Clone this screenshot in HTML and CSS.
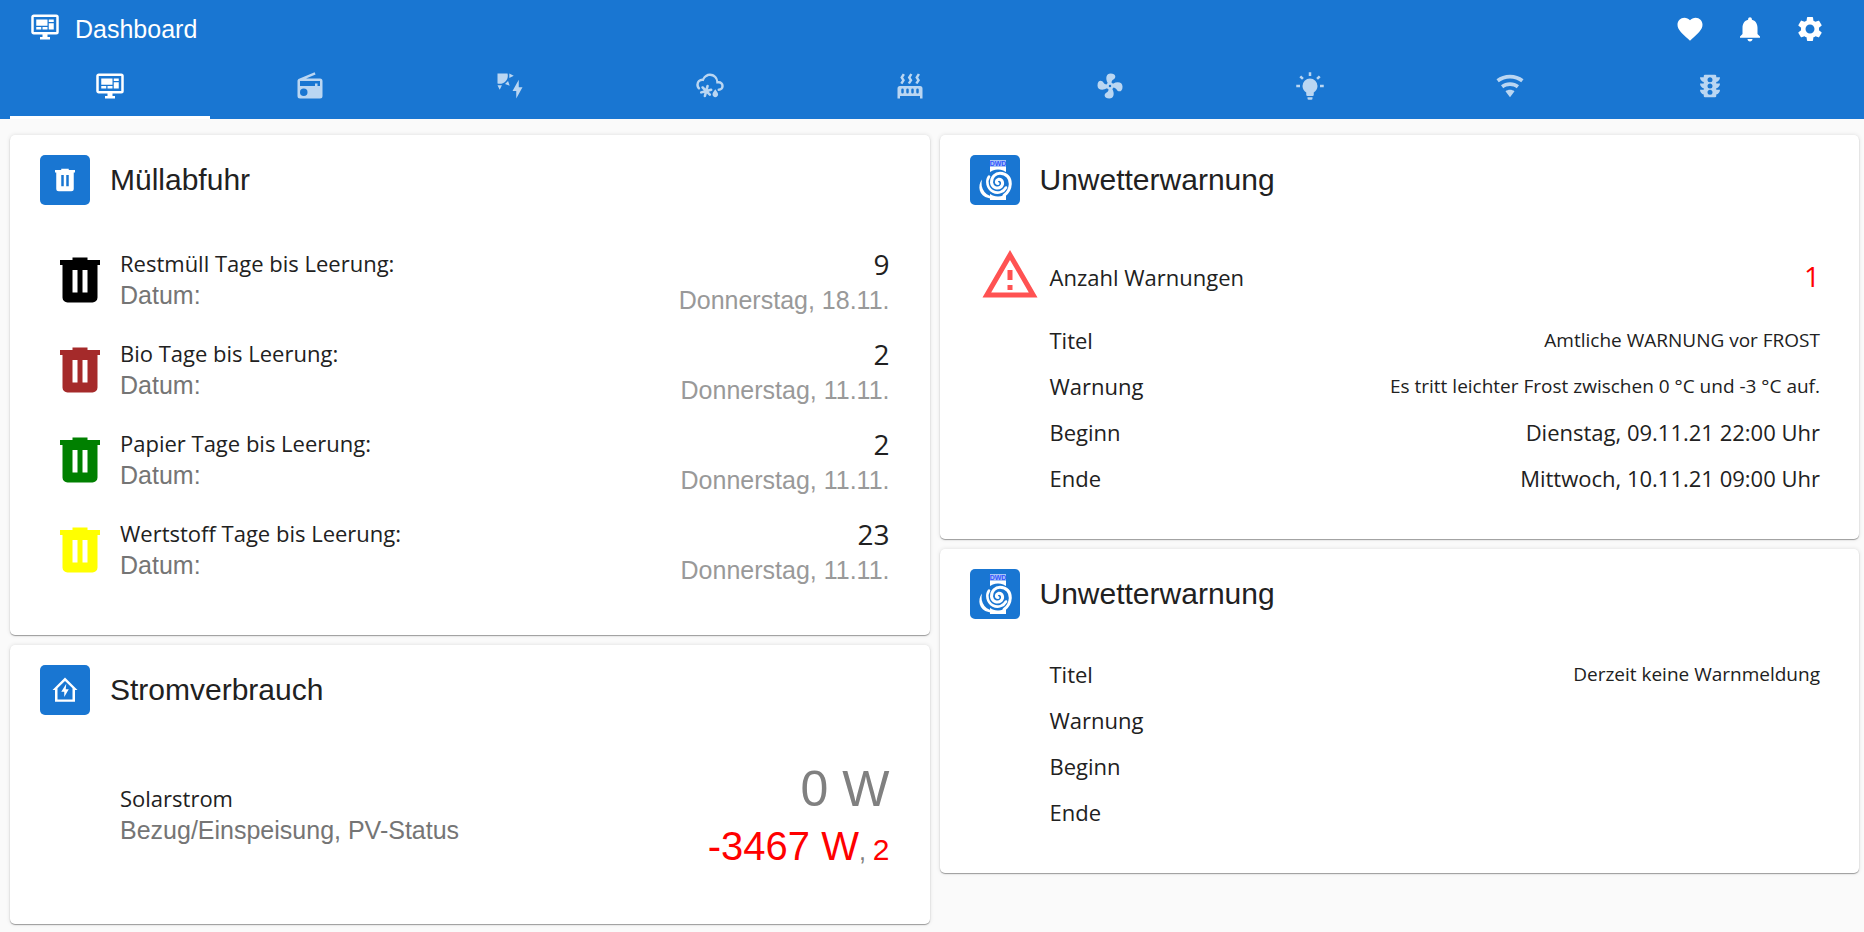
FILE: index.html
```html
<!DOCTYPE html>
<html lang="de">
<head>
<meta charset="utf-8">
<title>Dashboard</title>
<meta name="viewport" content="width=device-width, initial-scale=1">
<link rel="stylesheet" href="styles.css">
</head>
<body>
<svg class="sprite" aria-hidden="true">
  <symbol id="monitor" viewBox="0 0 24 24"><path d="M21,16V4H3V16H21M21,2A2,2 0 0,1 23,4V16A2,2 0 0,1 21,18H14V20H16V22H8V20H10V18H3C1.89,18 1,17.1 1,16V4C1,2.89 1.89,2 3,2H21M5,6H14V11H5V6M15,6H19V8H15V6M19,9V14H15V9H19M5,12H9V14H5V12M10,12H14V14H10V12Z"/></symbol>
  <symbol id="trash" viewBox="0 0 24 24"><path d="M9,3V4H4V6H5V19A2,2 0 0,0 7,21H17A2,2 0 0,0 19,19V6H20V4H15V3H9M9,8H11V17H9V8M13,8H15V17H13V8Z"/></symbol>
  <symbol id="dwd" viewBox="0 0 50 50">
    <path fill="#fff" d="M20 12h16v33H20z"/>
    <path fill="#a9c4f5" d="M20 5h16v7H20z"/>
    <circle cx="28" cy="28" r="13.500" fill="#1976d2"/>
    <path fill="none" stroke="#fff" stroke-width="3" stroke-linecap="round" d="M28 28.500C26 28.500 25.500 25.500 28.500 24.300C32.500 23.800 34 29 31 31.800C27.500 34.500 22 32.500 21.500 27.500C21.300 22 25.500 18.200 30 18.200C36.500 18.300 40.500 23 40.300 29C40 34.500 37.500 38 34 40.500"/>
    <path fill="none" stroke="#fff" stroke-width="2.600" stroke-linecap="round" d="M19 21.500C16 26 17 33.500 23 36.500C28 39 33.500 37 36 32.500"/>
    <path fill="#fff" d="M12 24.500C7 31 9 41 18.500 43C23 44.500 29 44 33 41.500C25 43 18 41.500 14.500 37C11.500 33 11 29 12 24.500z"/>
  </symbol>
</svg>

<header class="header">
  <div class="toolbar">
    <h1 class="brand"><svg class="icon brand-icon" aria-hidden="true"><use href="#monitor"/></svg>Dashboard</h1>
    <div class="actions">
      <button class="action" type="button" aria-label="Favoriten"><svg class="icon" viewBox="0 0 24 24"><path d="M12,21.35L10.55,20.03C5.4,15.36 2,12.27 2,8.5C2,5.41 4.42,3 7.5,3C9.24,3 10.91,3.81 12,5.08C13.09,3.81 14.76,3 16.5,3C19.58,3 22,5.41 22,8.5C22,12.27 18.6,15.36 13.45,20.03L12,21.35Z"/></svg></button>
      <button class="action" type="button" aria-label="Benachrichtigungen"><svg class="icon" viewBox="0 0 24 24"><path d="M12 22c1.1 0 2-.9 2-2h-4c0 1.1.89 2 2 2zm6-6v-5c0-3.07-1.64-5.64-4.5-6.32V4c0-.83-.67-1.5-1.5-1.5s-1.5.67-1.5 1.5v.68C7.63 5.36 6 7.92 6 11v5l-2 2v1h16v-1l-2-2z"/></svg></button>
      <button class="action" type="button" aria-label="Einstellungen"><svg class="icon" viewBox="0 0 24 24"><path d="M19.14,12.94c0.04-0.3,0.06-0.61,0.06-0.94c0-0.32-0.02-0.64-0.07-0.94l2.03-1.58c0.18-0.14,0.23-0.41,0.12-0.61l-1.92-3.32c-0.12-0.22-0.37-0.29-0.59-0.22l-2.39,0.96c-0.5-0.38-1.03-0.7-1.62-0.94L14.4,2.81c-0.04-0.24-0.24-0.41-0.48-0.41h-3.84c-0.24,0-0.43,0.17-0.47,0.41L9.25,5.35C8.66,5.59,8.12,5.92,7.63,6.29L5.24,5.33c-0.22-0.08-0.47,0-0.59,0.22L2.74,8.87C2.62,9.08,2.66,9.34,2.86,9.48l2.03,1.58C4.84,11.36,4.8,11.69,4.8,12s0.02,0.64,0.07,0.94l-2.03,1.58c-0.18,0.14-0.23,0.41-0.12,0.61l1.92,3.32c0.12,0.22,0.37,0.29,0.59,0.22l2.39-0.96c0.5,0.38,1.03,0.7,1.62,0.94l0.36,2.54c0.05,0.24,0.24,0.41,0.48,0.41h3.84c0.24,0,0.44-0.17,0.47-0.41l0.36-2.54c0.59-0.24,1.13-0.56,1.62-0.94l2.39,0.96c0.22,0.08,0.47,0,0.59-0.22l1.92-3.32c0.12-0.22,0.07-0.47-0.12-0.61L19.14,12.94zM12,15.6c-1.98,0-3.6-1.62-3.6-3.6s1.62-3.6,3.6-3.6s3.6,1.62,3.6,3.6S13.98,15.6,12,15.6z"/></svg></button>
    </div>
  </div>
  <nav class="tabs" aria-label="Seiten">
    <button class="tab tab-active" type="button" aria-label="Dashboard" aria-current="page"><svg class="icon"><use href="#monitor"/></svg></button>
    <button class="tab" type="button" aria-label="Radio"><svg class="icon" viewBox="0 0 24 24"><path d="M20,6A2,2 0 0,1 22,8V20A2,2 0 0,1 20,22H4A2,2 0 0,1 2,20V8C2,7.15 2.53,6.42 3.28,6.13L15.71,1L16.47,2.83L8.83,6H20M20,8H4V12H16V10H18V12H20V8M7,14A3,3 0 0,0 4,17A3,3 0 0,0 7,20A3,3 0 0,0 10,17A3,3 0 0,0 7,14Z"/></svg></button>
    <button class="tab" type="button" aria-label="Solarstrom"><svg class="icon" viewBox="0 0 24 24"><path d="M11.45,2V5.55L15,3.77L11.45,2M10.45,8L8,10.46L11.75,11.71L10.45,8M2,11.45L3.77,15L5.55,11.45H2M10,2H2V10C2.57,10.17 3.17,10.25 3.77,10.25C7.35,10.26 10.26,7.35 10.27,3.75C10.26,3.16 10.17,2.57 10,2M17,22V16H14L19,7V13H22L17,22Z"/></svg></button>
    <button class="tab" type="button" aria-label="Wetter"><svg class="icon" viewBox="0 0 24 24"><path d="M18.5,18.67C18.5,19.96 17.5,21 16.25,21C15,21 14,19.96 14,18.67C14,17.12 16.25,14.5 16.25,14.5C16.25,14.5 18.5,17.12 18.5,18.67M4,17.36C3.86,16.82 4.18,16.25 4.73,16.11L7,15.5L5.33,13.86C4.93,13.46 4.93,12.81 5.33,12.4C5.73,12 6.4,12 6.79,12.4L8.45,14.05L9.04,11.8C9.18,11.24 9.75,10.92 10.29,11.07C10.85,11.21 11.17,11.78 11,12.33L10.42,14.58L12.67,14C13.22,13.83 13.79,14.15 13.93,14.71C14.08,15.25 13.76,15.82 13.2,15.96L10.95,16.55L12.6,18.21C13,18.6 13,19.27 12.6,19.67C12.2,20.07 11.54,20.07 11.15,19.67L9.5,18L8.89,20.27C8.75,20.83 8.18,21.14 7.64,21C7.08,20.86 6.77,20.29 6.91,19.74L7.5,17.5L5.26,18.09C4.71,18.23 4.14,17.92 4,17.36M1,11A5,5 0 0,1 6,6C7,3.65 9.3,2 12,2C15.43,2 18.24,4.66 18.5,8.03L19,8A4,4 0 0,1 23,12A4,4 0 0,1 19,16A1,1 0 0,1 18,15A1,1 0 0,1 19,14A2,2 0 0,0 21,12A2,2 0 0,0 19,10H17V9A5,5 0 0,0 12,4C9.5,4 7.45,5.82 7.06,8.19C6.73,8.07 6.37,8 6,8A3,3 0 0,0 3,11C3,11.85 3.35,12.61 3.91,13.16C4.27,13.55 4.26,14.16 3.88,14.54C3.5,14.93 2.85,14.93 2.47,14.54C1.56,13.63 1,12.38 1,11Z"/></svg></button>
    <button class="tab" type="button" aria-label="Heizung"><svg class="icon" viewBox="0 0 24 24"><path d="M7.95,3L6.53,5.19L7.95,7.4H7.94L5.95,10.5L4.22,9.6L5.64,7.39L4.22,5.19L6.22,2.09L7.95,3M13.95,2.89L12.53,5.1L13.95,7.3L13.94,7.31L11.95,10.4L10.22,9.5L11.64,7.3L10.22,5.1L12.22,2L13.95,2.89M20,2.89L18.56,5.1L20,7.3V7.31L18,10.4L16.25,9.5L17.67,7.3L16.25,5.1L18.25,2L20,2.89M2,22V14A2,2 0 0,1 4,12H20A2,2 0 0,1 22,14V22H20V20H4V22H2M6,14A1,1 0 0,0 5,15V17A1,1 0 0,0 6,18A1,1 0 0,0 7,17V15A1,1 0 0,0 6,14M10,14A1,1 0 0,0 9,15V17A1,1 0 0,0 10,18A1,1 0 0,0 11,17V15A1,1 0 0,0 10,14M14,14A1,1 0 0,0 13,15V17A1,1 0 0,0 14,18A1,1 0 0,0 15,17V15A1,1 0 0,0 14,14M18,14A1,1 0 0,0 17,15V17A1,1 0 0,0 18,18A1,1 0 0,0 19,17V15A1,1 0 0,0 18,14Z"/></svg></button>
    <button class="tab" type="button" aria-label="Lüftung"><svg class="icon" viewBox="0 0 24 24"><path d="M12,11A1,1 0 0,0 11,12A1,1 0 0,0 12,13A1,1 0 0,0 13,12A1,1 0 0,0 12,11M12.5,2C17,2 17.11,5.57 14.75,6.75C13.76,7.24 13.32,8.29 13.13,9.22C13.61,9.42 14.03,9.73 14.35,10.13C18.05,8.13 22.03,8.92 22.03,12.5C22.03,17 18.46,17.1 17.28,14.73C16.78,13.74 15.72,13.3 14.79,13.11C14.59,13.59 14.28,14 13.88,14.34C15.87,18.03 15.08,22 11.5,22C7,22 6.91,18.42 9.27,17.24C10.25,16.75 10.69,15.71 10.89,14.79C10.4,14.59 9.97,14.27 9.65,13.87C5.96,15.85 2,15.07 2,11.5C2,7 5.56,6.89 6.74,9.26C7.24,10.25 8.29,10.68 9.22,10.87C9.41,10.39 9.73,9.97 10.14,9.65C8.15,5.96 8.94,2 12.5,2Z"/></svg></button>
    <button class="tab" type="button" aria-label="Licht"><svg class="icon" viewBox="0 0 24 24"><path d="M12,6A6,6 0 0,1 18,12C18,14.22 16.79,16.16 15,17.2V19A1,1 0 0,1 14,20H10A1,1 0 0,1 9,19V17.2C7.21,16.16 6,14.22 6,12A6,6 0 0,1 12,6M14,21V22A1,1 0 0,1 13,23H11A1,1 0 0,1 10,22V21H14M20,11H23V13H20V11M1,11H4V13H1V11M13,1V4H11V1H13M4.92,3.5L7.05,5.64L5.63,7.05L3.5,4.93L4.92,3.5M16.95,5.63L19.07,3.5L20.5,4.93L18.37,7.05L16.95,5.63Z"/></svg></button>
    <button class="tab" type="button" aria-label="WLAN"><svg class="icon" viewBox="0 0 24 24"><path d="M12,21L15.6,16.2C14.6,15.45 13.35,15 12,15C10.65,15 9.4,15.45 8.4,16.2L12,21M12,3C7.95,3 4.21,4.34 1.2,6.6L3,9C5.5,7.12 8.62,6 12,6C15.38,6 18.5,7.12 21,9L22.8,6.6C19.79,4.34 16.05,3 12,3M12,9C9.3,9 6.81,9.89 4.8,11.4L6.6,13.8C8.1,12.67 9.97,12 12,12C14.03,12 15.9,12.67 17.4,13.8L19.2,11.4C17.19,9.89 14.7,9 12,9Z"/></svg></button>
    <button class="tab" type="button" aria-label="Verkehr"><svg class="icon" viewBox="0 0 24 24"><path d="M12,9A2,2 0 0,1 10,7C10,5.89 10.9,5 12,5C13.11,5 14,5.89 14,7A2,2 0 0,1 12,9M12,14A2,2 0 0,1 10,12C10,10.89 10.9,10 12,10C13.11,10 14,10.89 14,12A2,2 0 0,1 12,14M12,19A2,2 0 0,1 10,17C10,15.89 10.9,15 12,15C13.11,15 14,15.89 14,17A2,2 0 0,1 12,19M20,10H17V8.86C18.72,8.41 20,6.86 20,5H17V4A1,1 0 0,0 16,3H8A1,1 0 0,0 7,4V5H4C4,6.86 5.28,8.41 7,8.86V10H4C4,11.86 5.28,13.41 7,13.86V15H4C4,16.86 5.28,18.41 7,18.86V20A1,1 0 0,0 8,21H16A1,1 0 0,0 17,20V18.86C18.72,18.41 20,16.86 20,15H17V13.86C18.72,13.41 20,11.86 20,10Z"/></svg></button>
  </nav>
</header>

<main class="board">
  <div class="column">
    <section class="card">
      <header class="card-head"><span class="tile"><svg class="icon" aria-hidden="true"><use href="#trash"/></svg></span><h2 class="card-title">Müllabfuhr</h2></header>
      <ul class="list">
        <li class="row bin-row">
          <svg class="bin bin-black" aria-hidden="true"><use href="#trash"/></svg>
          <div class="main"><div class="label">Restmüll Tage bis Leerung:</div><div class="sub">Datum:</div></div>
          <div class="side"><div class="days">9</div><div class="date">Donnerstag, 18.11.</div></div>
        </li>
        <li class="row bin-row">
          <svg class="bin bin-brown" aria-hidden="true"><use href="#trash"/></svg>
          <div class="main"><div class="label">Bio Tage bis Leerung:</div><div class="sub">Datum:</div></div>
          <div class="side"><div class="days">2</div><div class="date">Donnerstag, 11.11.</div></div>
        </li>
        <li class="row bin-row">
          <svg class="bin bin-green" aria-hidden="true"><use href="#trash"/></svg>
          <div class="main"><div class="label">Papier Tage bis Leerung:</div><div class="sub">Datum:</div></div>
          <div class="side"><div class="days">2</div><div class="date">Donnerstag, 11.11.</div></div>
        </li>
        <li class="row bin-row">
          <svg class="bin bin-yellow" aria-hidden="true"><use href="#trash"/></svg>
          <div class="main"><div class="label">Wertstoff Tage bis Leerung:</div><div class="sub">Datum:</div></div>
          <div class="side"><div class="days">23</div><div class="date">Donnerstag, 11.11.</div></div>
        </li>
      </ul>
    </section>

    <section class="card">
      <header class="card-head"><span class="tile"><svg class="icon" viewBox="0 0 24 24" aria-hidden="true"><path d="M12 2L2 12H4V21.300H20V12H22L12 2M18 19.500H6V10.600L12 4.800L18 10.600V19.500M13 7L9 13.300H11.400V17.500L15 11.300H12.600L13 7Z" fill-rule="evenodd"/></svg></span><h2 class="card-title">Stromverbrauch</h2></header>
      <ul class="list">
        <li class="row power-row">
          <div class="main"><div class="label">Solarstrom</div><div class="sub">Bezug/Einspeisung, PV-Status</div></div>
          <div class="side"><div class="power">0 W</div><div class="feed"><span class="feed-watt">-3467 W</span>, <span class="feed-status">2</span></div></div>
        </li>
      </ul>
    </section>
  </div>

  <div class="column">
    <section class="card">
      <header class="card-head"><span class="tile"><svg class="logo" viewBox="0 0 50 50" aria-hidden="true"><use href="#dwd"/><text class="dwd-text" x="28" y="11" text-anchor="middle">DWD</text></svg></span><h2 class="card-title">Unwetterwarnung</h2></header>
      <ul class="list warn-list">
        <li class="row count-row">
          <svg class="alert" viewBox="0 0 24 24" aria-hidden="true"><path d="M12,2L1,21H23M12,6L19.53,19H4.47M11,10V14H13V10M11,16V18H13V16"/></svg>
          <div class="label">Anzahl Warnungen</div><div class="count">1</div>
        </li>
        <li class="row"><div class="label">Titel</div><div class="note">Amtliche WARNUNG vor FROST</div></li>
        <li class="row"><div class="label">Warnung</div><div class="note">Es tritt leichter Frost zwischen 0 °C und -3 °C auf.</div></li>
        <li class="row"><div class="label">Beginn</div><div class="label">Dienstag, 09.11.21 22:00 Uhr</div></li>
        <li class="row"><div class="label">Ende</div><div class="label">Mittwoch, 10.11.21 09:00 Uhr</div></li>
      </ul>
    </section>

    <section class="card">
      <header class="card-head"><span class="tile"><svg class="logo" viewBox="0 0 50 50" aria-hidden="true"><use href="#dwd"/><text class="dwd-text" x="28" y="11" text-anchor="middle">DWD</text></svg></span><h2 class="card-title">Unwetterwarnung</h2></header>
      <ul class="list warn-list">
        <li class="row"><div class="label">Titel</div><div class="note">Derzeit keine Warnmeldung</div></li>
        <li class="row"><div class="label">Warnung</div></li>
        <li class="row"><div class="label">Beginn</div></li>
        <li class="row"><div class="label">Ende</div></li>
      </ul>
    </section>
  </div>
</main>
</body>
</html>
```
FILE: styles.css
```css
:root {
  --blue: #1976d2;
  --ink: #212121;
  --ui: "Open Sans", "Noto Sans", sans-serif;
  --sans: "Liberation Sans", Arial, sans-serif;
}
* { box-sizing: border-box; }
body {
  margin: 0;
  background: #fafafa;
  color: var(--ink);
  font-family: var(--sans);
}
h1, h2, ul { margin: 0; padding: 0; font-weight: 400; list-style: none; }
button { border: 0; padding: 0; background: none; color: inherit; font: inherit; cursor: pointer; }
svg { display: block; fill: currentColor; }
.sprite { position: absolute; width: 0; height: 0; }
.icon { width: 30px; height: 30px; }

/* Header */
.header { background: var(--blue); color: #fff; }
.toolbar {
  display: flex;
  align-items: center;
  justify-content: space-between;
  height: 58px;
  padding: 0 24px 0 30px;
}
.brand { display: flex; align-items: center; gap: 15px; font-size: 25px; line-height: 30px; }
.brand-icon { height: 34px; padding-bottom: 4px; }
.actions { display: flex; }
.action { display: grid; place-items: center; width: 60px; height: 58px; }
.tabs { display: flex; padding: 0 54px 0 10px; }
.tab {
  display: grid;
  place-items: center;
  flex: 1;
  height: 61px;
  padding-bottom: 2px;
  border-bottom: 3px solid transparent;
  color: rgba(255, 255, 255, 0.7);
}
.tab-active { color: #fff; border-color: #fff; }

/* Card grid */
.board {
  display: grid;
  grid-template-columns: 1fr 1fr;
  gap: 10px;
  padding: 16px 5px 8px 10px;
}
.column { display: flex; flex-direction: column; gap: 10px; min-width: 0; }
.card {
  background: #fff;
  border-radius: 5px;
  box-shadow: 0 1px 1px rgba(0, 0, 0, 0.35), 0 0 4px rgba(0, 0, 0, 0.12);
}
.card-head { display: flex; align-items: center; gap: 20px; padding: 20px 30px; }
.card-title { font-size: 30px; line-height: 36px; }
.tile {
  display: grid;
  place-items: center;
  width: 50px;
  height: 50px;
  border-radius: 5px;
  background: var(--blue);
  color: #fff;
}
.logo { width: 50px; height: 50px; }
.dwd-text { font: 700 7px var(--sans); fill: #3355ff; }

/* Rows */
.list { padding: 10px 40px 40px; }
.row {
  display: flex;
  align-items: center;
  justify-content: space-between;
  gap: 10px;
  min-height: 46px;
  padding-left: 70px;
}
.side { padding-top: 3px; text-align: right; }
.label { padding-bottom: 3px; font: 22px/28px var(--ui); }
.sub { color: #757575; font-size: 25px; line-height: 31px; }
.main { flex: 1; }

.bin-row { height: 90px; padding-left: 0; }
.bin { width: 60px; height: 60px; }
.bin-black { color: #000; }
.bin-brown { color: #a52a2a; }
.bin-green { color: #008000; }
.bin-yellow { color: #ff0; }
.days { font: 28px/36px var(--ui); }
.date { color: #999; font-size: 25px; line-height: 36px; }

.power-row { height: 139px; }
.power-row .side { padding-top: 8px; }
.power { color: #808080; font-size: 50px; line-height: 60px; }
.feed { color: #808080; font-size: 25px; line-height: 54px; }
.feed-watt { color: #f00; font-size: 40px; }
.feed-status { color: #f00; font-size: 30px; }

.warn-list { padding: 13px 39px 37px 40px; }
.count-row { height: 80px; padding-left: 0; }
.count-row .label { flex: 1; }
.alert { width: 60px; height: 66px; padding-bottom: 6px; color: #ff5252; }
.count { padding-bottom: 4px; color: #f00; font: 28px/36px var(--ui); }
.note { padding-bottom: 3px; font: 19px/28px var(--ui); }
```
